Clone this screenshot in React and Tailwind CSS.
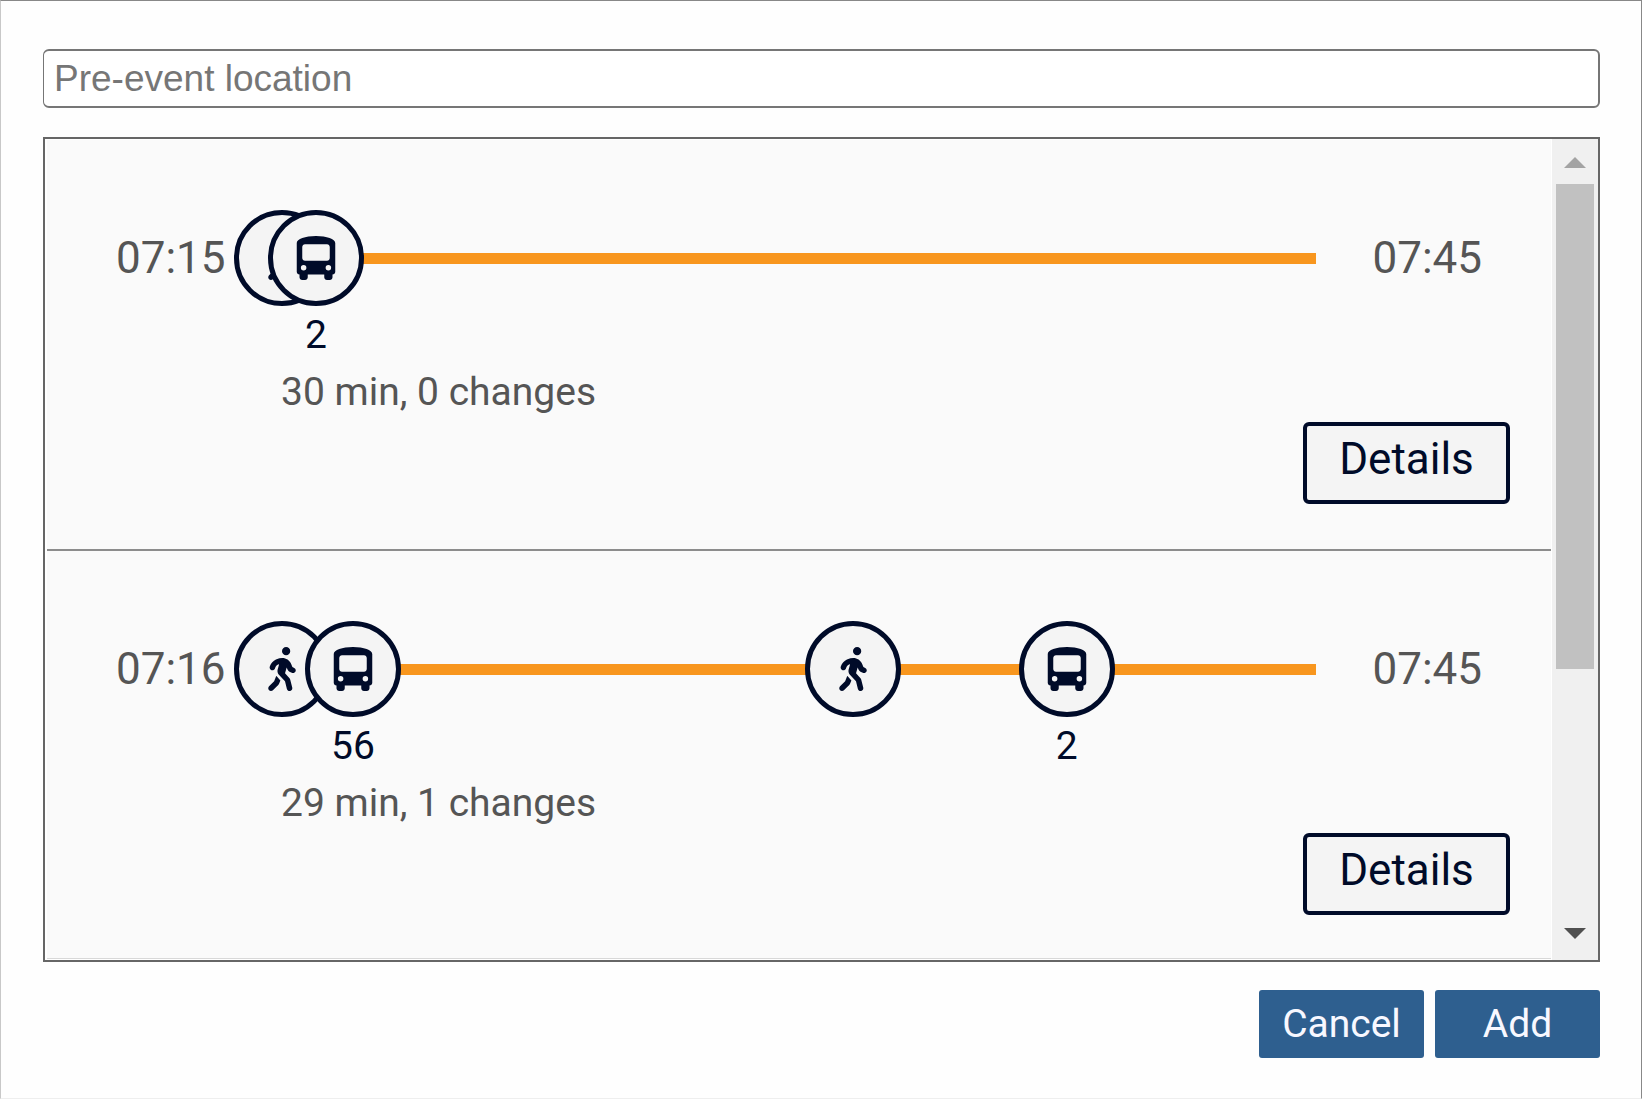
import { FaBusSimple, FaPersonWalking } from "react-icons/fa6";

const journeys = [
  {
    start: "07:15",
    end: "07:45",
    summary: "30 min, 0 changes",
    legs: [
      { mode: "walk", minutes: 1 },
      { mode: "bus", minutes: 29, line: "2" },
    ],
  },
  {
    start: "07:16",
    end: "07:45",
    summary: "29 min, 1 changes",
    legs: [
      { mode: "walk", minutes: 2 },
      { mode: "bus", minutes: 14, line: "56" },
      { mode: "walk", minutes: 6 },
      { mode: "bus", minutes: 7, line: "2" },
    ],
  },
];

function Leg({ leg }) {
  const Icon = leg.mode === "bus" ? FaBusSimple : FaPersonWalking;
  return (
    <li className="relative h-[11px] bg-[#f8961e]" style={{ flex: `${leg.minutes} 1 0` }}>
      <div className="absolute left-0 top-1/2 flex size-24 -translate-x-1/2 -translate-y-1/2 items-center justify-center rounded-full border-5 border-[#000b29] bg-[#f4f4f4] text-[#000b29]">
        <Icon className="size-11" aria-label={leg.mode} />
        {leg.line && (
          <span className="absolute top-24 text-[39px] leading-12">{leg.line}</span>
        )}
      </div>
    </li>
  );
}

function Journey({ journey }) {
  return (
    <li className="border-b-2 border-[#8c8c8c] pb-[45px] pl-[69px] pr-[69px] pt-23 last:border-b last:border-[#d8d8d8] last:pb-[43px]">
      <div className="flex h-13 items-center text-[44px] text-[#555]">
        <time>{journey.start}</time>
        <ol className="ml-14 mr-14 flex flex-1">
          {journey.legs.map((leg, i) => (
            <Leg key={i} leg={leg} />
          ))}
        </ol>
        <time>{journey.end}</time>
      </div>
      <p className="ml-[165px] mt-21 text-[39px] leading-12 text-[#555]">{journey.summary}</p>
      <div className="mt-1.5 flex justify-end">
        <button
          type="button"
          className="-mr-7 h-[82px] w-[207px] rounded-md border-4 border-[#000b29] bg-[#f4f4f4] pb-2 text-[44px] leading-none text-[#000b29]"
        >
          Details
        </button>
      </div>
    </li>
  );
}

export default function App() {
  return (
    <form className="min-h-screen border border-b-[#eeeeee] border-l-[#c8c8c8] border-r-[#888] border-t-[#888] bg-[#fefefe] pb-10 pl-[42px] pr-[41px] pt-12 font-[Roboto,sans-serif]">
      <input
        type="text"
        aria-label="Pre-event location"
        placeholder="Pre-event location"
        className="block h-[59px] w-full rounded-md border-2 border-l border-[#767676] bg-white px-2.5 font-['Liberation_Sans',Arial,sans-serif] text-[37px] placeholder:text-[#767676]"
      />
      <div className="mt-[29px] flex border-2 border-[#666] bg-white">
        <ul className="my-px ml-0.5 mr-px flex-1 bg-[#fafafa]">
          {journeys.map((journey) => (
            <Journey key={journey.start} journey={journey} />
          ))}
        </ul>
        <div className="flex w-[46px] flex-col items-center bg-[#f0f0f0]">
          <button
            type="button"
            aria-label="Scroll up"
            className="flex h-[45px] w-full items-center justify-center pt-0.5"
          >
            <svg width="22" height="11" viewBox="0 0 22 11" className="fill-[#a3a3a3]">
              <path d="M11 0L22 11H0z" />
            </svg>
          </button>
          <div className="w-[38px] flex-1">
            <div className="h-[66.4%] bg-[#c1c1c1]" />
          </div>
          <button
            type="button"
            aria-label="Scroll down"
            className="flex h-[45px] w-full items-center justify-center pb-2"
          >
            <svg width="22" height="11" viewBox="0 0 22 11" className="fill-[#505050]">
              <path d="M0 0H22L11 11z" />
            </svg>
          </button>
        </div>
      </div>
      <div className="mt-7 flex justify-end gap-[11px] text-[39px] text-[#f8f8ff]">
        <button type="button" className="h-[68px] w-[165px] rounded-[3px] bg-[#2e5f8f]">
          Cancel
        </button>
        <button type="submit" className="h-[68px] w-[165px] rounded-[3px] bg-[#2e5f8f]">
          Add
        </button>
      </div>
    </form>
  );
}
